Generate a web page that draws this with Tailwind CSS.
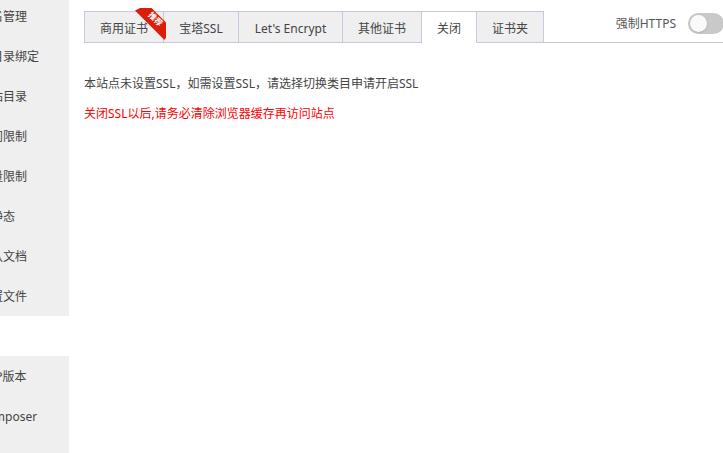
<!DOCTYPE html>
<html lang="zh-CN">
<head>
  <meta charset="UTF-8" />
  <meta name="viewport" content="width=device-width, initial-scale=1.0" />
  <title>站点修改 - SSL</title>
  <script src="https://cdn.jsdelivr.net/npm/@tailwindcss/browser@4"></script>
</head>
<body class="flex min-h-screen overflow-hidden bg-white font-['Noto_Sans','Noto_Sans_CJK_SC',sans-serif] text-xs text-[#444]">
  <!-- side menu, partly slid out to the left -->
  <nav class="-ml-9 h-screen w-[105px] shrink-0 overflow-hidden bg-[#efefef] leading-10 whitespace-nowrap">
    <ul class="-mt-1">
      <li><a href="#" class="block h-10 pt-px pl-[15px]">域名管理</a></li>
      <li><a href="#" class="block h-10 pt-px pl-[15px]">子目录绑定</a></li>
      <li><a href="#" class="block h-10 pt-px pl-[15px]">网站目录</a></li>
      <li><a href="#" class="block h-10 pt-px pl-[15px]">访问限制</a></li>
      <li><a href="#" class="block h-10 pt-px pl-[15px]">流量限制</a></li>
      <li><a href="#" class="block h-10 pt-px pl-[15px]">伪静态</a></li>
      <li><a href="#" class="block h-10 pt-px pl-[15px]">默认文档</a></li>
      <li><a href="#" class="block h-10 pt-px pl-[15px]">配置文件</a></li>
      <li><a href="#" class="block h-10 bg-white pt-px pl-[15px] text-[#20a53a]">SSL</a></li>
      <li><a href="#" class="block h-10 pt-px pl-[15px]">PHP版本</a></li>
      <li><a href="#" class="block h-10 pt-px pl-[15px]">Composer</a></li>
    </ul>
  </nav>

  <main class="min-w-0 flex-1 pt-[11px] pl-[15px]">
    <div class="flex h-8 justify-between border-b border-[#cac8dc]">
      <div class="flex h-8 border-l border-[#cac8dc] whitespace-nowrap">
        <button class="relative border border-l-0 border-[#cac8dc] bg-[#efefef] px-[15px] pt-1">
          商用证书
          <!-- recommended ribbon -->
          <svg class="absolute -top-1 -right-1 z-10" width="32" height="33" viewBox="0 0 32 33">
            <path d="M0 2.5 L5 0 H16.5 L31 14.5 V29.5 L29.5 32 Z" fill="#dc1e08" />
            <text x="20.5" y="14" transform="rotate(45 20.5 11)" text-anchor="middle" font-size="8" font-weight="bold" fill="#fff">推荐</text>
          </svg>
        </button>
        <button class="min-w-[75px] border border-l-0 border-[#cac8dc] bg-[#efefef] px-[15px] pt-1">宝塔SSL</button>
        <button class="min-w-[104px] border border-l-0 border-[#cac8dc] bg-[#efefef] px-[15px] pt-1">Let's Encrypt</button>
        <button class="border border-l-0 border-[#cac8dc] bg-[#efefef] px-[15px] pt-1">其他证书</button>
        <button class="border border-l-0 border-[#cac8dc] border-b-white bg-white px-[15px] pt-1">关闭</button>
        <button class="border border-l-0 border-[#cac8dc] bg-[#efefef] px-[15px] pt-1">证书夹</button>
      </div>
      <div class="-mr-px flex h-6 shrink-0 items-center gap-3">
        <label for="toHttps" class="pt-0.5 text-[#555]">强制HTTPS</label>
        <input type="checkbox" id="toHttps"
               class="relative h-[21px] w-9 appearance-none rounded-full bg-[#c9c9c9] before:absolute before:top-0.5 before:left-0.5 before:size-[17px] before:rounded-full before:bg-[#fafafa] before:shadow-sm before:content-[''] checked:bg-[#20a53a] checked:before:left-[17px]" />
      </div>
    </div>

    <div class="pt-[26px] leading-[30px]">
      <p>本站点未设置SSL，如需设置SSL，请选择切换类目申请开启SSL</p>
      <p class="text-[#f00]">关闭SSL以后,请务必清除浏览器缓存再访问站点</p>
    </div>
  </main>
</body>
</html>
